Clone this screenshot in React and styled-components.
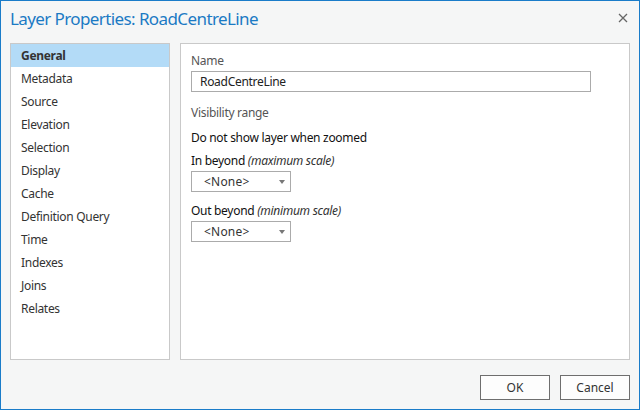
import React from "react";
import styled, { createGlobalStyle } from "styled-components";

const GlobalStyle = createGlobalStyle`
  html, body {
    margin: 0;
    padding: 0;
    background: #f5f6f6;
  }
  body {
    font-family: "Noto Sans", "Open Sans", sans-serif;
    font-size: 12px;
    letter-spacing: -0.3px;
    color: #222;
  }
`;

const Window = styled.div`
  width: 640px;
  height: 410px;
  box-sizing: border-box;
  border: 1px solid #1a7cc9;
  background: #f5f6f6;
  display: flex;
  flex-direction: column;
  padding: 0 9px;
`;

const Header = styled.div`
  height: 42px;
  display: flex;
  align-items: flex-start;
  justify-content: space-between;
`;

const Title = styled.h1`
  margin: 6px 0 0 0;
  font-size: 17px;
  font-weight: 400;
  color: #1b7ac4;
  letter-spacing: -0.6px;
`;

const CloseButton = styled.button`
  border: none;
  background: none;
  padding: 0;
  margin: 11px 2px 0 0;
  width: 11px;
  height: 11px;
  display: flex;
  align-items: center;
  justify-content: center;
  cursor: pointer;
`;

const Body = styled.div`
  display: flex;
  gap: 10px;
  height: 317px;
`;

const Panel = styled.div`
  box-sizing: border-box;
  border: 1px solid #c9c9c9;
  background: #fff;
  width: ${(p) => p.$width}px;
`;

const NavList = styled.ul`
  list-style: none;
  margin: 0;
  padding: 0;
`;

const NavItem = styled.li`
  height: 23px;
  line-height: 23px;
  padding-left: 10px;
  font-weight: ${(p) => (p.$active ? 700 : 400)};
  background: ${(p) => (p.$active ? "#b3dbf7" : "transparent")};
  color: #333;
`;

const Content = styled.div`
  padding: 8px 10px;
`;

const Label = styled.div`
  color: #555;
  line-height: 18px;
  margin-top: ${(p) => p.$top || 0}px;
`;

const Heading = styled.div`
  color: #111;
  font-size: 12px;
  line-height: 18px;
  margin-top: ${(p) => p.$top || 0}px;

  em {
    color: #333;
  }
`;

const TextInput = styled.input`
  display: block;
  box-sizing: border-box;
  width: 400px;
  height: 21px;
  margin-top: 1px;
  border: 1px solid #ababab;
  padding: 0 8px;
  font-family: inherit;
  font-size: 12px;
  letter-spacing: -0.3px;
  color: #222;
  outline: none;
`;

const Select = styled.div`
  box-sizing: border-box;
  width: 100px;
  height: 21px;
  margin-top: 1px;
  border: 1px solid #ababab;
  display: flex;
  align-items: center;
  padding: 0 5px 0 12px;
  color: #333;
  letter-spacing: 0.2px;
`;

const SelectText = styled.span`
  flex: 1;
`;

const Arrow = styled.span`
  width: 0;
  height: 0;
  border-left: 3.5px solid transparent;
  border-right: 3.5px solid transparent;
  border-top: 4px solid #777;
`;

const Footer = styled.div`
  display: flex;
  justify-content: flex-end;
  gap: 10px;
  margin-top: 15px;
`;

const Button = styled.button`
  box-sizing: border-box;
  width: 70px;
  height: 25px;
  border: 1px solid #6e6e6e;
  background: #fdfdfd;
  font-family: inherit;
  font-size: 12px;
  color: #333;
`;

const navItems = [
  "General",
  "Metadata",
  "Source",
  "Elevation",
  "Selection",
  "Display",
  "Cache",
  "Definition Query",
  "Time",
  "Indexes",
  "Joins",
  "Relates",
];

const Dropdown = () => (
  <Select>
    <SelectText>&lt;None&gt;</SelectText>
    <Arrow />
  </Select>
);

export default function App() {
  return (
    <>
      <GlobalStyle />
      <Window>
        <Header>
          <Title>Layer Properties: RoadCentreLine</Title>
          <CloseButton aria-label="Close">
            <svg width="10" height="10" viewBox="0 0 10 10">
              <path d="M1 1L9 9M9 1L1 9" stroke="#666" strokeWidth="1.3" />
            </svg>
          </CloseButton>
        </Header>
        <Body>
          <Panel $width={160}>
            <NavList>
              {navItems.map((item, i) => (
                <NavItem key={item} $active={i === 0}>
                  {item}
                </NavItem>
              ))}
            </NavList>
          </Panel>
          <Panel $width={450}>
            <Content>
              <Label>Name</Label>
              <TextInput defaultValue="RoadCentreLine" />
              <Label $top={12}>Visibility range</Label>
              <Heading $top={7}>Do not show layer when zoomed</Heading>
              <Heading $top={5}>
                In beyond <em>(maximum scale)</em>
              </Heading>
              <Dropdown />
              <Heading $top={10}>
                Out beyond <em>(minimum scale)</em>
              </Heading>
              <Dropdown />
            </Content>
          </Panel>
        </Body>
        <Footer>
          <Button>OK</Button>
          <Button>Cancel</Button>
        </Footer>
      </Window>
    </>
  );
}
